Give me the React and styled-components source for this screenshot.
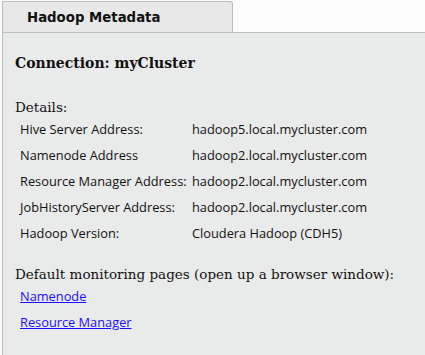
import React from "react";
import styled, { createGlobalStyle } from "styled-components";

const Global = createGlobalStyle`
  html, body { margin: 0; padding: 0; background: #fbfbfb; }
  body { width: 425px; height: 355px; overflow: hidden; }
`;

const Page = styled.div`
  display: flex;
  flex-direction: column;
  height: 355px;
  padding-left: 2px;
  box-sizing: border-box;
`;

const TabBar = styled.div`
  display: flex;
  padding-top: 1px;
`;

const Tab = styled.div`
  box-sizing: border-box;
  width: 231px;
  height: 31px;
  border: 1px solid #bcbcbc;
  border-bottom: none;
  border-top-right-radius: 3px;
  background: #e8e8e8;
  padding-left: 24px;
  display: flex;
  align-items: center;
  font-family: "DejaVu Sans", sans-serif;
  font-weight: bold;
  font-size: 13.3px;
  color: #111;
`;

const Panel = styled.div`
  flex: 1;
  border-top: 1px solid #bcbcbc;
  border-left: 1px solid #bcbcbc;
  background: #e9eaea;
  padding: 0 12px;
  display: flex;
  flex-direction: column;
`;

const Heading = styled.h2`
  margin: 20px 0 0;
  font-family: "DejaVu Serif", serif;
  font-weight: bold;
  font-size: 14px;
  line-height: 20px;
  color: #111;
`;

const Label = styled.div`
  margin-top: ${(p) => p.$top}px;
  font-family: "DejaVu Serif", serif;
  font-size: 13.5px;
  line-height: 18px;
  color: #111;
`;

const Table = styled.div`
  display: grid;
  grid-template-columns: 172px auto;
  grid-auto-rows: 26px;
  align-items: center;
  padding-left: 5px;
  font-family: "Open Sans", sans-serif;
  font-size: 12.8px;
  color: #111;
`;

const Links = styled.div`
  display: flex;
  flex-direction: column;
  padding-left: 5px;
`;

const Link = styled.a`
  height: 26px;
  display: flex;
  align-items: center;
  font-family: "Open Sans", sans-serif;
  font-size: 12.8px;
  color: #1a0dff;
  text-decoration: underline;
`;

const rows = [
  ["Hive Server Address:", "hadoop5.local.mycluster.com"],
  ["Namenode Address", "hadoop2.local.mycluster.com"],
  ["Resource Manager Address:", "hadoop2.local.mycluster.com"],
  ["JobHistoryServer Address:", "hadoop2.local.mycluster.com"],
  ["Hadoop Version:", "Cloudera Hadoop (CDH5)"],
];

export default function App() {
  return (
    <Page>
      <Global />
      <TabBar>
        <Tab>Hadoop Metadata</Tab>
      </TabBar>
      <Panel>
        <Heading>Connection: myCluster</Heading>
        <Label $top={25}>Details:</Label>
        <Table>
          {rows.map(([k, v]) => (
            <React.Fragment key={k}>
              <span>{k}</span>
              <span>{v}</span>
            </React.Fragment>
          ))}
        </Table>
        <Label $top={19}>Default monitoring pages (open up a browser window):</Label>
        <Links>
          <Link href="#">Namenode</Link>
          <Link href="#">Resource Manager</Link>
        </Links>
      </Panel>
    </Page>
  );
}
